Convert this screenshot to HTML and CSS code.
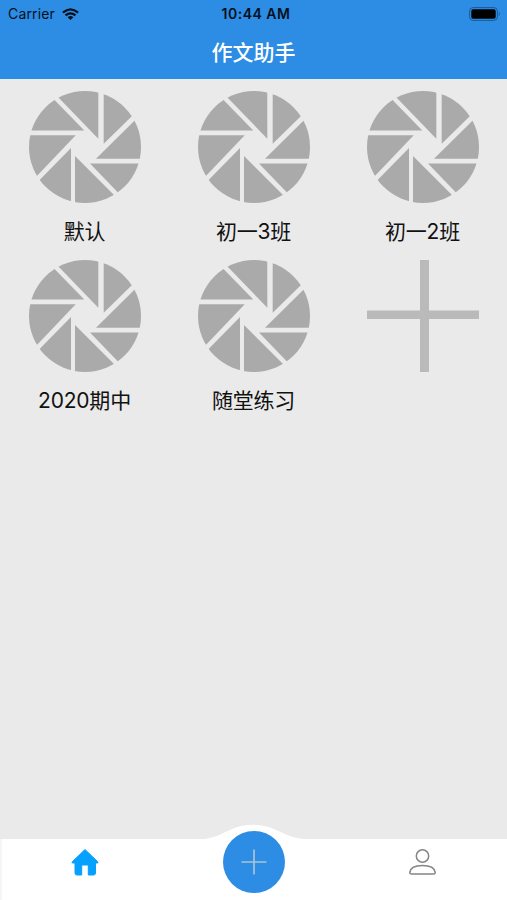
FILE: index.html
```html
<!doctype html>
<html lang="zh-CN">
<head>
  <meta charset="utf-8">
  <meta name="viewport" content="width=device-width, initial-scale=1.0">
  <title>作文助手</title>
  <link rel="stylesheet" href="styles.css">
</head>
<body>
  <svg class="symbols" width="0" height="0">
    <clipPath id="lens"><circle cx="56" cy="56" r="56"/></clipPath>
    <symbol id="aperture" viewBox="0 0 112 112">
      <g clip-path="url(#lens)">
        <path d="M69.3 47.7 20 -3.3V-10H69.3Z"/>
        <path d="M74.7 52.7V-5H125V3.4Z"/>
        <path d="M67 67.7 125 10.3V67.7Z"/>
        <path d="M61 72.5H125V125H111.6Z"/>
        <path d="M46 65V120H101Z"/>
        <path d="M42 57V120H-20Z"/>
        <path d="M46.7 44.3H-5V98.5Z"/>
        <path d="M55.3 39.5H-5V-22.3Z"/>
      </g>
    </symbol>
  </svg>

  <div class="app">
    <header>
      <div class="status-bar">
        <div class="carrier">
          <span>Carrier</span>
          <svg class="wifi" viewBox="0 0 17 12">
            <g fill="none" stroke="#04101d" stroke-width="2.2">
              <path d="M.9 4.6Q8.5 -1.9 16.1 4.6"/>
              <path d="M3.5 7.4Q8.5 3.2 13.5 7.4"/>
            </g>
            <path d="M5.6 9.2Q8.5 7 11.4 9.2L8.5 12Z" fill="#04101d"/>
          </svg>
        </div>
        <div class="time">10:44 AM</div>
        <svg class="battery" viewBox="0 0 32 14">
          <rect x=".6" y=".6" width="27.8" height="12.8" rx="3.5" fill="none" stroke="#1b5a96" stroke-width="1"/>
          <rect x="2.3" y="2.3" width="24.4" height="9.4" rx="1.8" fill="#000"/>
          <path d="M29.8 4.8Q31.8 7 29.8 9.2Z" fill="#1b5a96"/>
        </svg>
      </div>
      <h1>作文助手</h1>
    </header>

    <main class="folders">
      <div class="folder">
        <svg class="folder-icon"><use href="#aperture"/></svg>
        <p>默认</p>
      </div>
      <div class="folder">
        <svg class="folder-icon"><use href="#aperture"/></svg>
        <p>初一3班</p>
      </div>
      <div class="folder">
        <svg class="folder-icon"><use href="#aperture"/></svg>
        <p>初一2班</p>
      </div>
      <div class="folder">
        <svg class="folder-icon"><use href="#aperture"/></svg>
        <p>2020期中</p>
      </div>
      <div class="folder">
        <svg class="folder-icon"><use href="#aperture"/></svg>
        <p>随堂练习</p>
      </div>
      <div class="folder">
        <svg class="folder-icon add" viewBox="0 0 112 112">
          <path d="M53 0h9v112h-9zM0 50.5h112v8.500H0z"/>
        </svg>
      </div>
    </main>

    <nav class="tab-bar">
      <svg class="tab-hump" viewBox="0 0 116 17">
        <path d="M0 17V16C17 15 25 10 34 6C47-1 67-1 80 6C89 10 98 15 116 16V17Z" fill="#fff"/>
      </svg>
      <a class="tab" href="#">
        <svg width="28" height="28" viewBox="0 0 28 28">
          <path d="M14 1.5 26.5 13.5Q27.8 15 26 15H24.5V25Q24.5 27 22.5 27H17.3V17H10.7V27H6Q4 27 4 25V15H2Q.2 15 1.5 13.5Z" fill="#06a1ff" stroke="#06a1ff" stroke-width="1" stroke-linejoin="round"/>
        </svg>
      </a>
      <a class="tab" href="#">
        <span class="compose">
          <svg width="26" height="26" viewBox="0 0 26 26">
            <path d="M13 .5V25.5M.5 13H25.5" stroke="#a9c3d6" stroke-width="1.7"/>
          </svg>
        </span>
      </a>
      <a class="tab" href="#">
        <svg width="28" height="28" viewBox="0 0 28 28" fill="none" stroke="#858585" stroke-width="1.5">
          <circle cx="13.5" cy="8" r="6.2"/>
          <path d="M2.5 26Q.7 26 .8 24.3C1.5 19.5 7 17.5 13.5 17.5S25.5 19.5 26.2 24.3Q26.3 26 24.5 26Z"/>
        </svg>
      </a>
    </nav>
  </div>
</body>
</html>
```
FILE: styles.css
```css
:root {
  --primary: #2d8ce3;
  --page: #eaeaea;
  --icon: #aaaaaa;
}

* {
  margin: 0;
  padding: 0;
  box-sizing: border-box;
}

body {
  font-family: Inter, "Noto Sans CJK SC", sans-serif;
  background-color: var(--page);
  color: #111;
}

.symbols {
  position: absolute;
}

.app {
  display: flex;
  flex-direction: column;
  height: 900px;
}

header {
  height: 79px;
  background-color: var(--primary);
}

.status-bar {
  display: grid;
  grid-template-columns: 1fr auto 1fr;
  align-items: center;
  height: 27px;
  padding: 0 6px 0 8px;
  font-size: 14px;
  color: #04101d;
}

.carrier {
  display: flex;
  align-items: center;
  gap: 7px;
  letter-spacing: 0.15px;
}

.wifi {
  width: 17px;
  height: 12px;
}

.time {
  padding-left: 3px;
  font-weight: 600;
  letter-spacing: 0.5px;
}

.battery {
  width: 32px;
  height: 14px;
  justify-self: end;
}

h1 {
  font-size: 21px;
  font-weight: 500;
  line-height: 52px;
  text-align: center;
  color: white;
}

.folders {
  flex: 1;
  display: grid;
  grid-template-columns: repeat(3, 169px);
  grid-auto-rows: 169px;
  padding-top: 12px;
}

.folder {
  display: flex;
  flex-direction: column;
  align-items: center;
}

.folder-icon {
  width: 112px;
  height: 112px;
  fill: var(--icon);
}

.folder-icon.add {
  fill: #bababa;
}

.folder p {
  margin-top: 14px;
  font-size: 21px;
  line-height: 30px;
  letter-spacing: -0.2px;
}

.tab-bar {
  position: relative;
  display: grid;
  grid-template-columns: repeat(3, 169px);
  height: 61.5px;
  background-color: white;
  border-left: 2px solid #f5f5f5;
}

.tab-hump {
  position: absolute;
  left: 194px;
  top: -15px;
  width: 116px;
  height: 17px;
}

.tab {
  position: relative;
  left: -2px;
  display: flex;
  justify-content: center;
  padding-top: 9.5px;
}

.compose {
  display: flex;
  align-items: center;
  justify-content: center;
  width: 62px;
  height: 62px;
  margin-top: -17px;
  border-radius: 50%;
  background-color: var(--primary);
}
```
